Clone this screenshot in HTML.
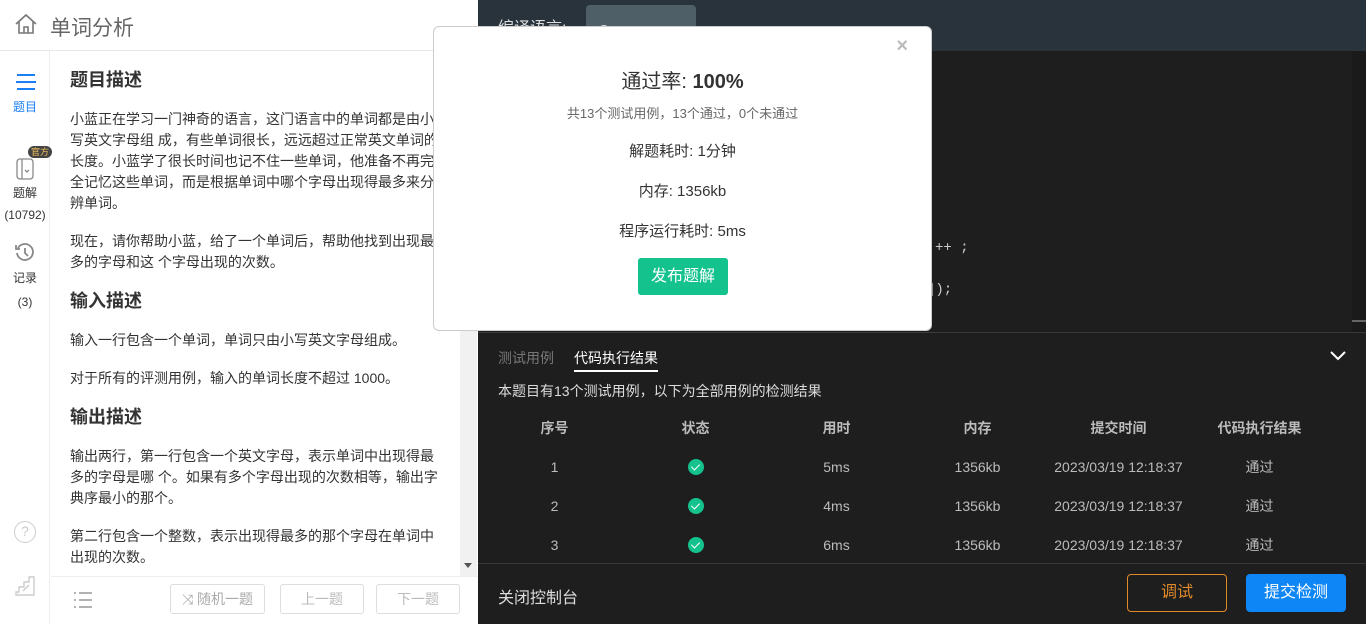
<!DOCTYPE html>
<html><head><meta charset="utf-8"><style>
*{margin:0;padding:0;box-sizing:border-box}
body{width:1366px;height:624px;overflow:hidden;position:relative;font-family:"Liberation Sans","Noto Sans CJK SC",sans-serif;background:#fff}
.abs{position:absolute}
.left{left:0;top:0;width:478px;height:624px;background:#fff}
.hdr{left:0;top:0;width:478px;height:51px;border-bottom:1px solid #e8e8e8}
.side{left:0;top:51px;width:50px;height:573px;border-right:1px solid #eee;text-align:center;font-size:12px;color:#333}
.content{left:70px;top:59px;width:370px;font-size:14px;color:#333;line-height:21px}
.content h3{font-size:18px;font-weight:bold;margin:10px 0 18px;line-height:22px}
.content p{margin-bottom:17px}
.scroll{left:460px;top:51px;width:17px;height:525px;background:#f1f1f1}
.lbot{left:51px;top:576px;width:427px;height:48px;border-top:1px solid #eee;background:#fff}
.btn{position:absolute;top:7px;height:30px;border:1px solid #ddd;border-radius:3px;color:#bbb;font-size:14px;text-align:center;line-height:28px}
.right{left:478px;top:0;width:888px;height:624px;background:#1e1e1e}
.top{left:478px;top:0;width:888px;height:51px;background:#28333c}
.modal{left:433px;top:26px;width:499px;height:305px;background:#fff;border-radius:6px;border:1px solid #ccc;text-align:center;color:#333}
table{border-collapse:collapse;position:absolute;left:484px;top:408px;width:846px;color:#bbb;font-size:14px;table-layout:fixed}
td,th{text-align:center;height:39px;font-weight:normal;width:141px}
th{color:#bbb;font-weight:bold}
.ok{display:inline-block;width:16px;height:16px;border-radius:50%;background:#13c28c;vertical-align:middle;position:relative}
.ok:after{content:"";position:absolute;left:5px;top:3px;width:4px;height:7px;border:solid #fff;border-width:0 1.5px 1.5px 0;transform:rotate(45deg)}
</style></head><body>
<div class="abs left"></div>
<div class="abs hdr">
<svg class="abs" style="left:14px;top:13px" width="24" height="22" viewBox="0 0 24 22" fill="none" stroke="#777" stroke-width="1.6"><path d="M2 11 L12 2 L22 11 M5 9 V20 H19 V9 M10 20 V14 H14 V20"/></svg>
<div class="abs" style="left:50px;top:12px;font-size:21px;color:#666">单词分析</div>
</div>
<div class="abs side">
<svg class="abs" style="left:14px;top:22px" width="24" height="18" viewBox="0 0 24 18" fill="none" stroke="#1a7ef5" stroke-width="2"><path d="M3 2 H21 M2 9 H22 M3 16 H21"/></svg>
<div class="abs" style="left:0;width:50px;top:47px;color:#1a7ef5">题目</div>
<div class="abs" style="left:28px;top:95px;background:#444;color:#f5c05a;font-size:9px;border-radius:6px;width:24px;line-height:12px;white-space:nowrap">官方</div>
<svg class="abs" style="left:15px;top:107px" width="20" height="22" viewBox="0 0 20 22" fill="none" stroke="#888" stroke-width="1.3"><rect x="2" y="1" width="16" height="20" rx="3"/><path d="M7 1 V21 M10 12 L12 14 L14 12"/></svg>
<div class="abs" style="left:0;width:50px;top:133px">题解</div>
<div class="abs" style="left:0;width:50px;top:157px">(10792)</div>
<svg class="abs" style="left:14px;top:191px" width="22" height="22" viewBox="0 0 22 22" fill="none" stroke="#888" stroke-width="1.8"><path d="M4 6 A8 8 0 1 1 3 11 M2 3 V7 H6 M11 6 V11 L14 14"/></svg>
<div class="abs" style="left:0;width:50px;top:218px">记录</div>
<div class="abs" style="left:0;width:50px;top:244px">(3)</div>
<div class="abs" style="left:14px;top:470px;width:22px;height:22px;border:1.5px solid #ccc;border-radius:50%;color:#ccc;font-size:14px;line-height:19px">?</div>
<svg class="abs" style="left:14px;top:524px" width="22" height="22" viewBox="0 0 22 22" fill="none" stroke="#ccc" stroke-width="1.4"><path d="M2 20 H20 V2 H15 V7 H10 V12 H5 V17 H2 Z M9 16 L15 10"/></svg>
</div>
<div class="abs content">
<h3>题目描述</h3>
<p>小蓝正在学习一门神奇的语言，这门语言中的单词都是由小写英文字母组 成，有些单词很长，远远超过正常英文单词的长度。小蓝学了很长时间也记不住一些单词，他准备不再完全记忆这些单词，而是根据单词中哪个字母出现得最多来分辨单词。</p>
<p>现在，请你帮助小蓝，给了一个单词后，帮助他找到出现最多的字母和这 个字母出现的次数。</p>
<h3>输入描述</h3>
<p>输入一行包含一个单词，单词只由小写英文字母组成。</p>
<p>对于所有的评测用例，输入的单词长度不超过 1000。</p>
<h3>输出描述</h3>
<p>输出两行，第一行包含一个英文字母，表示单词中出现得最多的字母是哪 个。如果有多个字母出现的次数相等，输出字典序最小的那个。</p>
<p>第二行包含一个整数，表示出现得最多的那个字母在单词中出现的次数。</p>
</div>
<div class="abs scroll"><div class="abs" style="left:4px;bottom:4px;border:4px solid transparent;border-top:5px solid #555"></div></div>
<div class="abs lbot">
<svg class="abs" style="left:22px;top:14px" width="20" height="18" viewBox="0 0 20 18" fill="none" stroke="#999" stroke-width="1.4"><path d="M1 2 H3 M6 2 H19 M1 9 H3 M6 9 H19 M1 16 H3 M6 16 H19"/></svg>
<div class="btn" style="left:119px;width:95px;color:#aaa">⤨ 随机一题</div>
<div class="btn" style="left:229px;width:84px">上一题</div>
<div class="btn" style="left:325px;width:84px">下一题</div>
</div>

<div class="abs right"></div>
<div class="abs top">
<div class="abs" style="left:20px;top:14px;color:#ddd;font-size:16px">编译语言:</div>
<div class="abs" style="left:108px;top:5px;width:110px;height:40px;background:#4f5f68;border-radius:4px;color:#ddd;padding:17px 12px;font-size:15px">C++</div>
</div>
<div class="abs" style="left:1352px;top:51px;width:14px;height:282px;background:#1a1a1a"></div>
<div class="abs" style="left:1352px;top:320px;width:14px;height:2px;background:#666"></div>
<div class="abs" style="left:935px;top:240px;color:#ccc;font-size:14px;font-family:'Liberation Mono',monospace">++ ;</div>
<div class="abs" style="left:927px;top:282px;color:#ccc;font-size:14px;font-family:'Liberation Mono',monospace">]);</div>
<div class="abs" style="left:478px;top:332px;width:888px;height:1px;background:#3a3a3a"></div>
<div class="abs" style="left:498px;top:348px;color:#777;font-size:14px">测试用例</div>
<div class="abs" style="left:574px;top:348px;color:#fff;font-size:14px;border-bottom:2px solid #fff;padding-bottom:2px">代码执行结果</div>
<svg class="abs" style="left:1329px;top:350px" width="18" height="12" viewBox="0 0 18 12" fill="none" stroke="#fff" stroke-width="2"><path d="M2 2 L9 9 L16 2"/></svg>
<div class="abs" style="left:498px;top:381px;color:#ddd;font-size:14px">本题目有13个测试用例，以下为全部用例的检测结果</div>
<table>
<tr><th>序号</th><th>状态</th><th>用时</th><th>内存</th><th>提交时间</th><th>代码执行结果</th></tr>
<tr><td>1</td><td><span class="ok"></span></td><td>5ms</td><td>1356kb</td><td>2023/03/19 12:18:37</td><td>通过</td></tr>
<tr><td>2</td><td><span class="ok"></span></td><td>4ms</td><td>1356kb</td><td>2023/03/19 12:18:37</td><td>通过</td></tr>
<tr><td>3</td><td><span class="ok"></span></td><td>6ms</td><td>1356kb</td><td>2023/03/19 12:18:37</td><td>通过</td></tr>
</table>
<div class="abs" style="left:478px;top:563px;width:888px;height:1px;background:#3a3a3a"></div>
<div class="abs" style="left:498px;top:584px;color:#ddd;font-size:16px">关闭控制台</div>
<div class="abs" style="left:1127px;top:574px;width:100px;height:38px;border:1px solid #e08a2a;border-radius:4px;color:#e08a2a;font-size:16px;text-align:center;line-height:36px">调试</div>
<div class="abs" style="left:1246px;top:574px;width:100px;height:38px;background:#0e86f5;border-radius:4px;color:#fff;font-size:16px;text-align:center;line-height:38px">提交检测</div>

<div class="abs modal">
<div class="abs" style="right:23px;top:8px;color:#bbb;font-size:20px;font-weight:bold">×</div>
<div class="abs" style="left:0;width:100%;top:38px;font-size:20px">通过率: <b>100%</b></div>
<div class="abs" style="left:0;width:100%;top:76px;font-size:13px;color:#666">共13个测试用例，13个通过，0个未通过</div>
<div class="abs" style="left:0;width:100%;top:113px;font-size:15px">解题耗时: 1分钟</div>
<div class="abs" style="left:0;width:100%;top:153px;font-size:15px">内存: 1356kb</div>
<div class="abs" style="left:0;width:100%;top:193px;font-size:15px">程序运行耗时: 5ms</div>
<div class="abs" style="left:204px;top:231px;width:90px;height:37px;background:#13c28c;border-radius:3px;color:#fff;font-size:16px;line-height:37px">发布题解</div>
</div>
</body></html>
